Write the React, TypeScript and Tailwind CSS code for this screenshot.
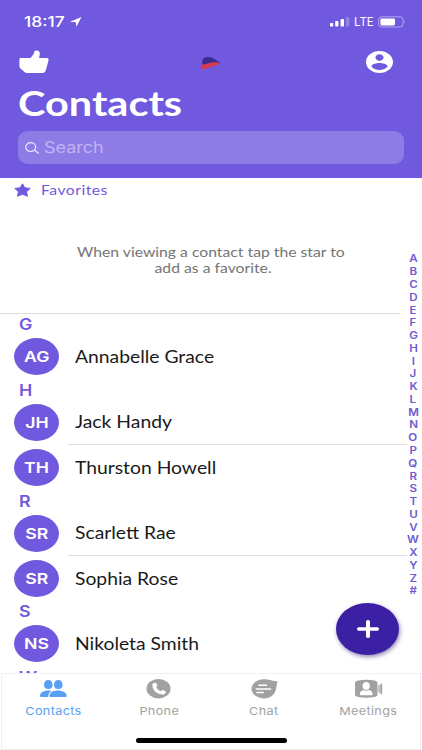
import React from 'react';

const lato = "font-['Lato','Noto_Sans',sans-serif]";
const inter = "font-['Inter','Roboto',sans-serif]";

type TextProps = { className?: string; children: React.ReactNode };

function Left({ className = '', children }: TextProps) {
  return <span className={`block w-max whitespace-nowrap origin-left ${className}`}>{children}</span>;
}

function Center({ className = '', children }: TextProps) {
  return <span className={`block w-max whitespace-nowrap origin-center ${className}`}>{children}</span>;
}

const sections = [
  { letter: 'G', people: [{ initials: 'AG', name: 'Annabelle Grace' }] },
  { letter: 'H', people: [{ initials: 'JH', name: 'Jack Handy' }, { initials: 'TH', name: 'Thurston Howell' }] },
  { letter: 'R', people: [{ initials: 'SR', name: 'Scarlett Rae' }, { initials: 'SR', name: 'Sophia Rose' }] },
  { letter: 'S', people: [{ initials: 'NS', name: 'Nikoleta Smith' }] },
  { letter: 'W', people: [] },
];

function StatusBar() {
  return (
    <div className="flex h-[44px] items-center pl-[24px] pr-[16px] text-white">
      <div className="w-[46px] shrink-0">
        <Left className={`${inter} text-[14.5px] font-medium leading-none scale-x-[1.2]`}>18:17</Left>
      </div>
      <svg width="12" height="10" viewBox="0 0 12 10"><path d="M11.5 0 6.4 9.8 5.8 5.2 0 4.8Z" fill="currentColor" /></svg>
      <svg className="ml-auto" width="20" height="10" viewBox="0 0 20 10" fill="currentColor">
        <rect x="0" y="6" width="3.2" height="3.5" rx=".8" />
        <rect x="5.2" y="4" width="3.2" height="5.5" rx=".8" />
        <rect x="10.6" y="2" width="3.4" height="7.5" rx=".8" />
        <rect x="16" y="0" width="3.3" height="9.5" rx=".8" opacity=".25" />
      </svg>
      <div className="ml-[4px] w-[24px] shrink-0 pt-[1px]">
        <Left className={`${inter} text-[11.5px] leading-none`}>LTE</Left>
      </div>
      <svg width="28" height="12" viewBox="0 0 28 12">
        <rect x=".6" y=".8" width="24.4" height="10.2" rx="3" fill="none" stroke="white" strokeOpacity=".45" />
        <rect x="2.4" y="2.4" width="14.6" height="7" rx="1.4" fill="white" />
        <path d="M26.3 4.2q1.6 1.7 0 3.4Z" fill="white" opacity=".5" />
      </svg>
    </div>
  );
}

function Header() {
  return (
    <header className="flex h-[178px] shrink-0 flex-col bg-[#7159df]">
      <StatusBar />
      <div className="flex h-[36px] items-center justify-between pl-[19px] pr-[29px]">
        <svg width="30" height="24" viewBox="0 0 30 24">
          <path d="M1.6 8H11.5L14.5 4.3C15 3.5 15 2.8 15.2 1.7C15.8 .3 18 0 19.5 1C21.3 2.3 21 4.3 20 8H28.4C29.4 8.2 29.8 9 29.5 10.3L26.8 20.6Q26.2 22.9 23.8 22.9H8Q6.5 22.9 5.5 22L1.4 18.4Q.5 17.5 .4 16.3V9.4Q.4 8 1.6 8Z" fill="white" />
        </svg>
        <svg className="ml-[7px] mt-[3px]" width="22" height="16" viewBox="0 0 22 16">
          <path d="M2.4 8.6C1.6 3.6 3.4.9 7.8.9C12.6.8 15.5 3.8 20.5 7.1L3.5 9.4Z" fill="#3c2b91" />
          <path d="M2.4 8.7C7 8 10 6.2 14.7 6.2C17.3 6.2 18.5 6.8 20.6 7.2C16.9 9 14.5 10 11.7 10.7C8.7 11.5 6 13.1 2.6 13.3C.5 13.3.1 10 2.4 8.7Z" fill="#d83a50" />
        </svg>
        <svg width="27" height="22" viewBox="2 2 20 20" preserveAspectRatio="none">
          <path fill="white" d="M12 2C6.48 2 2 6.48 2 12s4.48 10 10 10 10-4.48 10-10S17.52 2 12 2zm0 3c1.66 0 3 1.34 3 3s-1.34 3-3 3-3-1.34-3-3 1.34-3 3-3zm0 14.2c-2.5 0-4.71-1.28-6-3.22.03-1.99 4-3.08 6-3.08 1.99 0 5.97 1.09 6 3.08-1.29 1.94-3.5 3.22-6 3.22z" />
        </svg>
      </div>
      <h1 className="flex h-[51px] items-center pb-[5px] pl-[18px]">
        <Left className={`${lato} text-[34px] font-bold leading-none text-white scale-x-[1.22]`}>Contacts</Left>
      </h1>
      <div className="ml-[18px] flex h-[33px] w-[386px] items-center rounded-[10px/9px] bg-[#8e7ce6] pl-[7px]">
        <svg width="14" height="12" viewBox="0 0 14 12" fill="none" stroke="#ece8ff" strokeWidth="1.2" strokeLinecap="round">
          <ellipse cx="5.7" cy="5.1" rx="5" ry="4.4" /><path d="m9.6 8.3 3.8 3" />
        </svg>
        <Left className={`${inter} ml-[5px] text-[15.5px] leading-none text-[#c0b3f6] scale-x-[1.16]`}>Search</Left>
      </div>
    </header>
  );
}

function Favorites() {
  return (
    <section className="flex h-[136px] w-[400px] shrink-0 flex-col border-b border-[#dcdcdf]">
      <div className="flex h-[25px] items-center pl-[14px]">
        <svg className="mb-[1px]" width="17" height="14" viewBox="0 0 17 14"><path d="M8.5.8 10.8 4.8 16.2 5.4 12.5 8.7 13.5 13.2 8.5 11.2 3.5 13.2 4.5 8.7.8 5.4 6.2 4.8Z" fill="#7159df" stroke="#7159df" strokeWidth="1" strokeLinejoin="round" /></svg>
        <Left className={`${lato} ml-[10px] text-[13px] leading-none tracking-[.4px] text-[#7159df] scale-x-[1.21]`}>Favorites</Left>
      </div>
      <div className={`${lato} mt-[42px] flex flex-col items-center pl-[22px] text-[13.4px] leading-[15.5px] text-[#757575]`}>
        <Center className="scale-x-[1.175]">When viewing a contact tap the star to</Center>
        <Center className="scale-x-[1.175] pl-[3px]">add as a favorite.</Center>
      </div>
    </section>
  );
}

function ContactRow({ initials, name, divided }: { initials: string; name: string; divided: boolean }) {
  return (
    <div className="flex h-[45.25px] items-stretch pl-[14px]">
      <div className="my-auto flex h-[37px] w-[45px] shrink-0 items-center justify-center rounded-[50%] bg-[#7159df]">
        <Center className={`${inter} text-[15px] font-semibold leading-none text-white scale-x-[1.18]`}>{initials}</Center>
      </div>
      <div className={`ml-[9px] flex flex-1 items-center pl-[7px] pt-[1px] ${divided ? 'border-b border-[#dfdfe4]' : ''}`}>
        <Left className={`${lato} text-[16.5px] leading-none text-[#1a1a1a] scale-x-[1.17]`}>{name}</Left>
      </div>
    </div>
  );
}

function AlphabetIndex() {
  return (
    <div className="absolute left-[405px] top-[75px] flex w-[16.5px] flex-col items-center">
      {'ABCDEFGHIJKLMNOPQRSTUVWXYZ#'.split('').map((c) => (
        <span key={c} className={`${inter} flex h-[12.77px] items-center text-[9.8px] font-semibold leading-none text-[#7159cf] scale-x-[1.18]`}>{c}</span>
      ))}
    </div>
  );
}

const tabs = [
  {
    label: 'Contacts', active: true, offset: 'pr-[2px]', iconOffset: 'ml-[2px]',
    icon: (
      <g>
        <path d="M4 6.2C4 2.8 5.7.9 8.3.9c2.6 0 4.3 1.9 4.3 5.3 0 2-1.4 3.9-4.3 3.9S4 8.2 4 6.2ZM14 6.2C14 2.8 15.7.9 18.3.9c2.6 0 4.3 1.9 4.3 5.3 0 2-1.4 3.9-4.3 3.9S14 8.2 14 6.2Z" />
        <path d="M0 17c.2-3.4 3-5.4 8.2-5.5 1.7 0 2.8.2 3.3.5-2.2 1.2-3.3 3-3.3 6H1.3Q0 18 0 17ZM9.4 17c.2-3.4 3.2-5.5 8.4-5.5S26.5 13.6 26.7 17q0 1-1.3 1H10.7q-1.3 0-1.3-1Z" />
      </g>
    ),
  },
  {
    label: 'Phone', active: false, offset: 'pl-[1px]', iconOffset: '',
    icon: (
      <g>
        <ellipse cx="13.5" cy="9.7" rx="12" ry="9.7" />
        <path d="M8.3 4.3 10.2 3.7Q11 3.5 11.4 4.2L12.4 6.2Q12.6 6.8 12 7.3L11.1 8C11.9 9.9 13.5 11.4 15.9 12.2L17 11.2Q17.6 10.8 18.2 11.1L20.4 12.3Q21.2 12.7 20.8 13.4L19.7 15Q19.2 15.6 18 15.5C12 15.4 7.4 11.3 7.3 5.8Q7.3 4.6 8.3 4.3Z" fill="white" />
      </g>
    ),
  },
  {
    label: 'Chat', active: false, offset: 'pl-[2px]', iconOffset: 'ml-[1px]',
    icon: (
      <g>
        <path d="M13 .2C17 .1 19.5 1.5 25.6 2.2Q26.6 2.4 26.3 3.5C25.3 6.4 25.6 10.5 23.8 13.5C21.8 17.2 18 19.4 13 19.4C6 19.4.5 15.1.5 9.8S6 .2 13 .2Z" />
        <path d="M8 6.3h7.5M5.2 10h14.4M6 13.6h6.3" fill="none" stroke="white" strokeWidth="1.5" strokeLinecap="round" />
      </g>
    ),
  },
  {
    label: 'Meetings', active: false, offset: 'pl-[1px]', iconOffset: 'ml-[2px]',
    icon: (
      <g>
        <path d="M0 4Q0 2.2 2.2 1.8Q11.5-.5 20.5 1.8Q22.5 2.2 22.5 4V15.5Q22.5 17.3 20.5 17.7Q11.5 20 2.2 17.7Q0 17.3 0 15.5ZM23.4 6.5 26 4.7Q27.2 4 27.2 5.2V14.5Q27.2 15.6 26 15L23.4 13.2Z" />
        <path d="M25 4v12" stroke="white" strokeWidth=".6" />
        <path d="M7.6 7C7.6 4.2 9 3 11.2 3S14.8 4.2 14.8 7C14.8 8.9 13.8 10.9 11.2 10.9S7.6 8.9 7.6 7ZM4.8 15.4C4.9 12.9 6.7 11.4 8.7 11.1Q11.2 12.7 13.7 11.1C15.9 11.4 17.5 12.9 17.6 15.4Q17.6 16.2 16.7 16.2H5.7Q4.8 16.2 4.8 15.4Z" fill="white" />
      </g>
    ),
  },
];

function TabBar() {
  return (
    <nav className="mx-[1px] flex h-[77px] shrink-0 flex-col border border-[#f0f0f2] bg-white">
      <div className="flex h-[59px]">
        {tabs.map((t) => (
          <div key={t.label} className={`flex w-[104.5px] flex-col items-center pt-[5px] ${t.offset} ${t.active ? 'text-[#5aa0f2]' : 'text-[#a1a1a1]'}`}>
            <svg className={t.iconOffset} width="28" height="20" viewBox="0 0 28 20" fill="currentColor">{t.icon}</svg>
            <Center className={`${inter} mt-[6px] text-[11px] leading-[12px] tracking-[.3px] scale-x-[1.15]`}>{t.label}</Center>
          </div>
        ))}
      </div>
      <div className="mx-auto mt-[5px] h-[4.5px] w-[151px] rounded-full bg-black" />
    </nav>
  );
}

export default function App() {
  return (
    <div className="flex h-[750px] w-[422px] flex-col overflow-hidden bg-white">
      <Header />
      <main className="relative min-h-0 flex-1 overflow-hidden">
        <Favorites />
        <div className="w-[407px]">
          {sections.map((s) => (
            <section key={s.letter}>
              <h2 className="flex h-[20.25px] items-center pl-[19px] pt-[2px]">
                <Left className={`${inter} text-[15.5px] font-semibold leading-none text-[#7159df] scale-x-[1.15]`}>{s.letter}</Left>
              </h2>
              {s.people.map((p, i) => (
                <ContactRow key={p.name} {...p} divided={i < s.people.length - 1} />
              ))}
            </section>
          ))}
        </div>
        <AlphabetIndex />
        <button className="absolute left-[336px] top-[425px] flex h-[52px] w-[63px] items-center justify-center rounded-[50%] bg-[#3b20a4] shadow-[1px_2px_4px_rgba(40,20,110,0.5)]">
          <svg width="22" height="18" viewBox="0 0 22 18" fill="white"><rect x="0" y="7.3" width="22" height="3.4" rx="1.6" /><rect x="9" y="0" width="4" height="18" rx="1.8" /></svg>
        </button>
      </main>
      <TabBar />
    </div>
  );
}
